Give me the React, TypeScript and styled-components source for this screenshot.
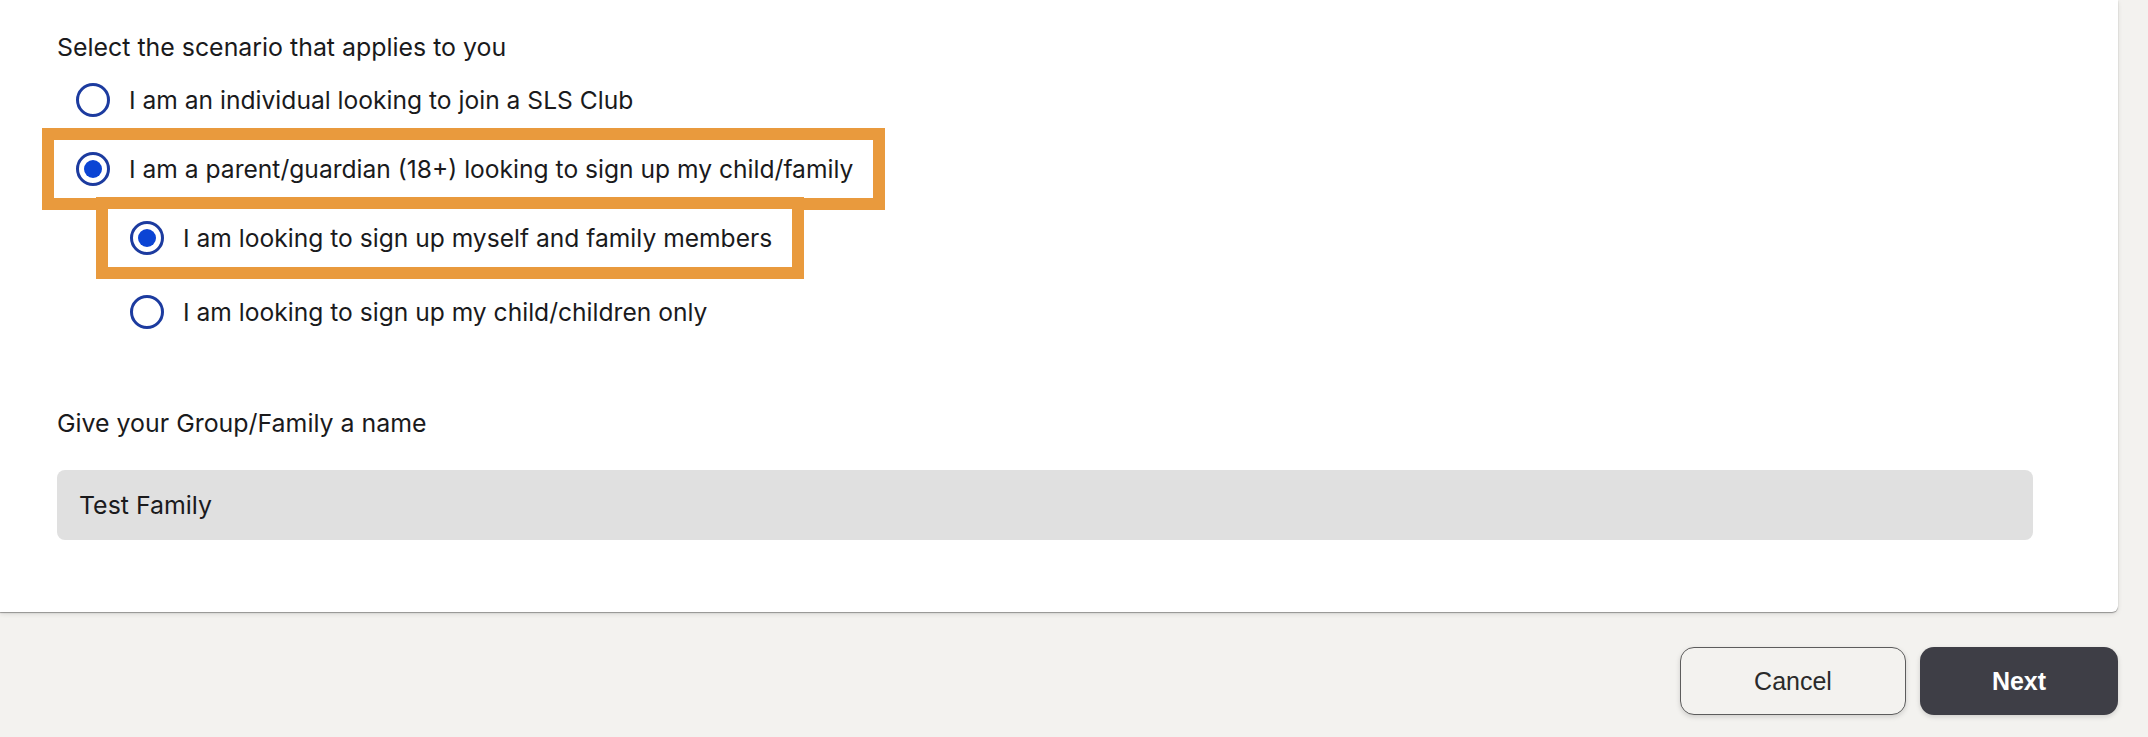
import React from "react";
import styled, { createGlobalStyle } from "styled-components";

const Global = createGlobalStyle`
  html, body { margin: 0; padding: 0; background: #f3f2ef; }
  body { font-family: Inter, "Noto Sans", sans-serif; color: #1a1a1c; }
  * { box-sizing: border-box; }
`;

const Page = styled.div`
  width: 2148px;
  height: 737px;
  background: #f3f2ef;
  padding-right: 30px;
  display: flex;
  flex-direction: column;
  overflow: hidden;
`;

const Card = styled.section`
  background: #ffffff;
  border-radius: 0 0 6px 0;
  box-shadow: 0 1px 1px rgba(0, 0, 0, 0.35), 0 2px 5px rgba(0, 0, 0, 0.1);
  padding: 27px 85px 72px 54px;
  display: flex;
  flex-direction: column;
`;

const Heading = styled.div`
  height: 40px;
  display: flex;
  align-items: center;
  padding-left: 3px;
  font-size: 24.9px;
`;

const OptionList = styled.div`
  display: flex;
  flex-direction: column;
  align-items: flex-start;
  margin-top: 4px;
`;

const SubList = styled.div`
  display: flex;
  flex-direction: column;
  align-items: flex-start;
  margin-left: 54px;
  margin-top: 11px;
`;

const Option = styled.label<{ $highlight?: boolean; $gap?: number }>`
  height: 58px;
  display: flex;
  align-items: center;
  gap: 19px;
  padding: 0 20px 0 22px;
  margin-top: ${(p) => p.$gap ?? 0}px;
  font-size: 24.6px;
  background: #fff;
  outline: ${(p) => (p.$highlight ? "12px solid #e99a3d" : "none")};
  cursor: pointer;
`;

const Radio = styled.span<{ $checked?: boolean }>`
  width: 34px;
  height: 34px;
  flex: none;
  border-radius: 50%;
  border: 3px solid #1c3b9f;
  display: flex;
  align-items: center;
  justify-content: center;
  &::after {
    content: "";
    width: 18px;
    height: 18px;
    border-radius: 50%;
    background: #0b44d4;
    display: ${(p) => (p.$checked ? "block" : "none")};
  }
`;

const FieldLabel = styled.div`
  height: 40px;
  display: flex;
  align-items: center;
  padding-left: 3px;
  margin-top: 62px;
  font-size: 24.9px;
`;

const TextInput = styled.input`
  margin-top: 27px;
  margin-left: 3px;
  height: 70px;
  border: none;
  border-radius: 8px;
  background: #e0e0e0;
  padding: 0 22px;
  font-family: Inter, "Noto Sans", sans-serif;
  font-size: 24.9px;
  color: #1a1a1c;
  outline: none;
`;

const Actions = styled.div`
  display: flex;
  justify-content: flex-end;
  gap: 14px;
  margin-top: 35px;
`;

const Button = styled.button<{ $primary?: boolean }>`
  height: 68px;
  width: ${(p) => (p.$primary ? 198 : 226)}px;
  border-radius: 14px;
  font-family: "Liberation Sans", Arial, sans-serif;
  font-size: 25px;
  font-weight: ${(p) => (p.$primary ? 700 : 400)};
  color: ${(p) => (p.$primary ? "#ffffff" : "#2a2a2a")};
  background: ${(p) => (p.$primary ? "#3e3e46" : "#f3f2ef")};
  border: ${(p) => (p.$primary ? "none" : "1.5px solid #5c5c5c")};
  box-shadow: 0 2px 5px rgba(0, 0, 0, 0.15);
  cursor: pointer;
`;

export default function App() {
  return (
    <Page>
      <Global />
      <Card>
        <Heading>Select the scenario that applies to you</Heading>
        <OptionList>
          <Option>
            <Radio />
            I am an individual looking to join a SLS Club
          </Option>
          <Option $highlight $gap={11}>
            <Radio $checked />
            I am a parent/guardian (18+) looking to sign up my child/family
          </Option>
          <SubList>
            <Option $highlight>
              <Radio $checked />
              I am looking to sign up myself and family members
            </Option>
            <Option $gap={16}>
              <Radio />
              I am looking to sign up my child/children only
            </Option>
          </SubList>
        </OptionList>
        <FieldLabel>Give your Group/Family a name</FieldLabel>
        <TextInput defaultValue="Test Family" />
      </Card>
      <Actions>
        <Button>Cancel</Button>
        <Button $primary>Next</Button>
      </Actions>
    </Page>
  );
}
